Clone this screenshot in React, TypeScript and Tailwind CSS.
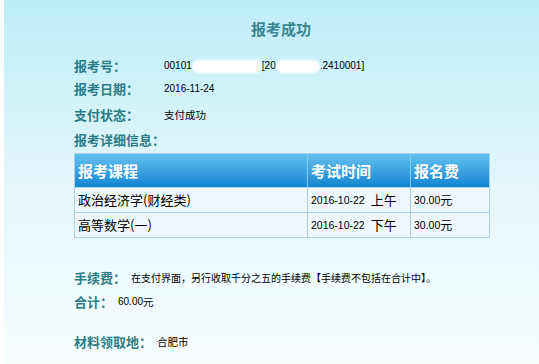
const cjk = "font-['Noto_Sans_CJK_SC','Noto_Sans',sans-serif]"
const num = "font-['Liberation_Sans','Noto_Sans_CJK_SC',sans-serif]"

interface Course {
  name: string
  date: string
  half: string
  fee: string
}

const courses: Course[] = [
  { name: '政治经济学(财经类)', date: '2016-10-22', half: '上午', fee: '30.00' },
  { name: '高等数学(一)', date: '2016-10-22', half: '下午', fee: '30.00' },
]

function Label({ children }: { children: React.ReactNode }) {
  return <span className="block text-[13px] font-bold text-[#2b7c86] leading-[20px]">{children}</span>
}

// white smudge that hides part of the number in the screenshot
function Mask({ w }: { w: string }) {
  return <span className={`inline-block h-[13px] ${w} bg-white rounded-full blur-[1px]`} />
}

export default function App() {
  return (
    <div className={`w-[539px] h-[364px] overflow-hidden border-l-4 border-white bg-linear-to-b from-[#bdedf9] via-[#e3f7fb] to-[#f8fdfe] ${cjk}`}>
      {/* Title */}
      <div className="pt-[16px] h-[36px] pl-[19px] text-center">
        <span className="text-[15px] font-bold text-[#3a8690] leading-[20px]">报考成功</span>
      </div>

      <div className="pl-[70px]">
        {/* Basic info */}
        <div className="mt-[19px] h-[22px] flex items-center">
          <div className="w-[90px]"><Label>报考号：</Label></div>
          <div className={`flex items-center text-[10px] leading-[20px] text-black ${num}`}>
            <span>00101</span>
            <Mask w="w-[70px]" />
            <span>[20</span>
            <Mask w="w-[44px]" />
            <span>.2410001]</span>
          </div>
        </div>
        <div className="mt-[1px] h-[22px] flex items-center">
          <div className="w-[90px]"><Label>报考日期：</Label></div>
          <span className={`text-[10px] leading-[20px] text-black ${num}`}>2016-11-24</span>
        </div>
        <div className="mt-[4px] h-[22px] flex items-center">
          <div className="w-[90px]"><Label>支付状态：</Label></div>
          <span className="text-[10.5px] leading-[20px] text-black">支付成功</span>
        </div>
        <div className="mt-[3px] h-[22px] flex items-center">
          <Label>报考详细信息：</Label>
        </div>

        {/* Detail table */}
        <div className="mt-[2px] w-[416px] border border-[#a9d2e7]">
          <div className="grid grid-cols-[232px_103px_1fr] h-[33px] bg-linear-to-b from-[#62c1ef] to-[#0b85d1] text-white text-[15px] font-bold leading-[20px]">
            <div className="flex items-center pl-[3px]">报考课程</div>
            <div className="flex items-center pl-[3px] border-l border-[#86cbee]">考试时间</div>
            <div className="flex items-center pl-[3px] border-l border-[#86cbee]">报名费</div>
          </div>
          {courses.map((c) => (
            <div key={c.name} className="grid grid-cols-[232px_103px_1fr] h-[25px] bg-[#eef8fc] border-t border-[#a9d2e7] text-[13px] leading-[20px] text-black">
              <div className="flex items-center pl-[3px]">{c.name}</div>
              <div className="flex items-center pl-[3px] border-l border-[#a9d2e7]">
                <span className={`text-[10.5px] ${num}`}>{c.date}</span>
                <span className="ml-[6px]">{c.half}</span>
              </div>
              <div className="flex items-center pl-[3px] border-l border-[#a9d2e7]">
                <span className={`text-[10.5px] ${num}`}>{c.fee}</span>
                <span className="text-[12px]">元</span>
              </div>
            </div>
          ))}
        </div>

        {/* Fees */}
        <div className="mt-[29px] h-[22px] flex items-center">
          <div className="w-[57px]"><Label>手续费：</Label></div>
          <span className="text-[10px] leading-[20px] text-black">在支付界面，另行收取千分之五的手续费【手续费不包括在合计中】。</span>
        </div>
        <div className="mt-[2px] h-[22px] flex items-center">
          <div className="w-[44px]"><Label>合计：</Label></div>
          <span className={`text-[10px] leading-[20px] text-black ${num}`}>60.00</span>
          <span className="text-[10.5px] leading-[20px] text-black">元</span>
        </div>
        <div className="mt-[18px] h-[22px] flex items-center">
          <div className="w-[83px]"><Label>材料领取地：</Label></div>
          <span className="text-[10.5px] leading-[20px] text-black">合肥市</span>
        </div>
      </div>
    </div>
  )
}
